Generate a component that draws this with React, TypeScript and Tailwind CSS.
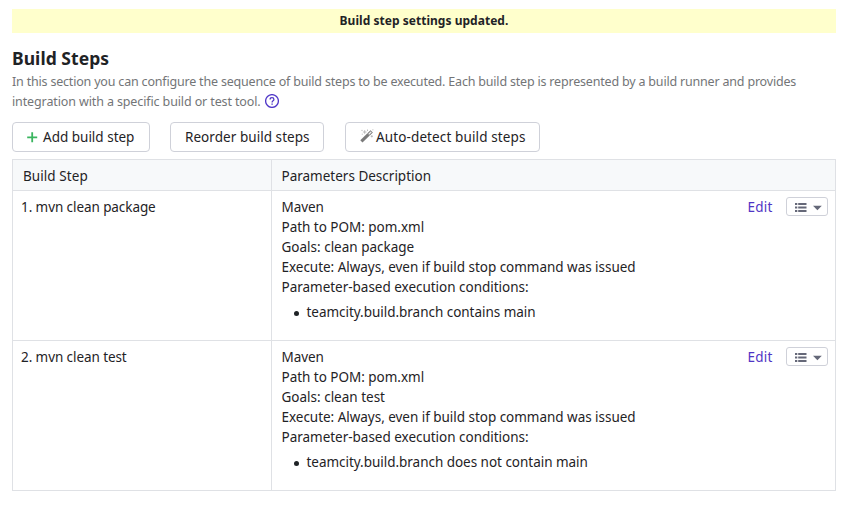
import React from "react";

type Step = { name: string; goals: string; condition: string };

const steps: Step[] = [
  { name: "1. mvn clean package", goals: "Goals: clean package", condition: "teamcity.build.branch contains main" },
  { name: "2. mvn clean test", goals: "Goals: clean test", condition: "teamcity.build.branch does not contain main" },
];

function HelpIcon() {
  return (
    <svg className="ml-1 inline-block h-[14px] w-[14px] align-[-2px]" viewBox="0 0 14 14" fill="none" stroke="#5038c8">
      <circle cx="7" cy="7" r="6.4" strokeWidth="1.3" />
      <path d="M5.1 5.5C5.1 4.3 5.9 3.7 7 3.7s1.9.7 1.9 1.7c0 1.4-1.8 1.4-1.8 3" strokeWidth="1.3" />
      <path d="M7.1 9.4v1.4" strokeWidth="1.4" />
    </svg>
  );
}

function WandIcon() {
  return (
    <svg className="h-[14px] w-[14px]" viewBox="0 0 14 14" fill="none">
      <path d="M1.4 12.4 8.6 5.4" stroke="#7a7a7a" strokeWidth="3.2" />
      <path d="M8.6 5.4l3.1-3" stroke="#707070" strokeWidth="3.2" />
      <path d="M8.8 5.2l2.5-2.4" stroke="#eeeeee" strokeWidth="1.4" />
      <path d="M4.7 1.2v3.6M2.9 3h3.6M7.5.5v1.5M11.8 6.2v2.2M10.7 7.3h2.2M1.4 1.4h1.2M12.4.8h1M1.8 5.2h1" stroke="#adadad" strokeWidth=".8" />
    </svg>
  );
}

function MenuButton() {
  return (
    <button className="flex h-[19px] w-[42px] items-center rounded-[3px] border border-[#cfd1d9] bg-white pl-[8px]">
      <svg className="mt-[2px] h-[9px] w-[28px]" viewBox="0 0 28 9" fill="#656878">
        <path d="M0 0h2.3v2H0zM0 3.5h2.3v2H0zM0 7h2.3v2H0zM3.2 0h8.3v2H3.2zM3.2 3.5h8.3v2H3.2zM3.2 7h8.3v2H3.2z" />
        <path d="M18 2.7h8.8l-4.4 4.5z" />
      </svg>
    </button>
  );
}

export default function App() {
  return (
    <div className="h-[505px] w-[844px] whitespace-nowrap bg-white pl-3 pt-[9px] font-['Noto_Sans',sans-serif] text-[13.5px] leading-5 text-[#1f2326]">
      <div className="flex h-6 w-[824px] justify-center bg-[#ffffcc] text-[12px] font-bold leading-[23px]">
        <span className="tracking-[0.03px]">Build step settings updated.</span>
      </div>
      <h1 className="mt-[15px] text-[17.5px] font-bold leading-5 tracking-[0.05px]">Build Steps</h1>
      <p className="mt-[4px] text-[12.5px] leading-5 text-[#737577]">
        <span className="block tracking-[-0.19px]">
          In this section you can configure the sequence of build steps to be executed. Each build step is represented by a build runner and provides
        </span>
        <span className="tracking-[-0.12px]">integration with a specific build or test tool.</span>
        <HelpIcon />
      </p>
      <div className="mt-[10px] flex h-[30px] leading-7">
        <button className="flex w-[138px] rounded-[4px] border border-[#cfd1d9] pl-[14px]">
          <svg className="mr-[5px] mt-[9px] h-[11px] w-[11px]" viewBox="0 0 11 11" stroke="#3ab55f" strokeWidth="1.8">
            <path d="M5.2 .3v10M.2 5.3h10" />
          </svg>
          <span>Add build step</span>
        </button>
        <button className="ml-5 flex w-[154px] rounded-[4px] border border-[#cfd1d9] pl-[14px]">
          <span className="tracking-[0.05px]">Reorder build steps</span>
        </button>
        <button className="ml-[21px] flex w-[195px] rounded-[4px] border border-[#cfd1d9] pl-[14px]">
          <span className="mr-[2px] mt-[6px]"><WandIcon /></span>
          <span className="tracking-[0.12px]">Auto-detect build steps</span>
        </button>
      </div>
      <div className="mt-[7px] w-[824px] border-x border-t border-[#dfe1e5]">
        <div className="flex h-[31px] border-b border-[#dfe1e5] bg-[#f7f9fa] pt-px leading-[31px]">
          <div className="-mt-px w-[259px] border-r border-[#dfe1e5] pl-[10px] pt-px">
            <span className="tracking-[0.07px]">Build Step</span>
          </div>
          <div className="pl-[9.5px]">
            <span>Parameters Description</span>
          </div>
        </div>
        {steps.map((s) => (
          <div key={s.name} className="flex h-[150px] border-b border-[#dfe1e5]">
            <div className="w-[259px] border-r border-[#dfe1e5] pl-2 pt-[6px]">
              <span className="tracking-[-0.08px]">{s.name}</span>
            </div>
            <div className="w-[466px] pl-[9.5px] pt-[6px]">
              <div className="tracking-[-0.05px]">Maven</div>
              <div className="tracking-[-0.02px]">Path to POM: pom.xml</div>
              <div>{s.goals}</div>
              <div className="tracking-[-0.03px]">Execute: Always, even if build stop command was issued</div>
              <div className="tracking-[-0.02px]">Parameter-based execution conditions:</div>
              <div className="mt-[5px] flex items-center pl-[12.5px]">
                <span className="mr-[7.5px] mt-[2px] h-[5px] w-[5px] rounded-full bg-[#1f2326]" />
                <span className="tracking-[-0.03px]">{s.condition}</span>
              </div>
            </div>
            <div className="flex w-[97px] pl-[9.5px] pt-[6px] text-[#4f35c4]">
              <span className="w-[38.5px] tracking-[0.2px]">Edit</span>
              <MenuButton />
            </div>
          </div>
        ))}
      </div>
    </div>
  );
}
